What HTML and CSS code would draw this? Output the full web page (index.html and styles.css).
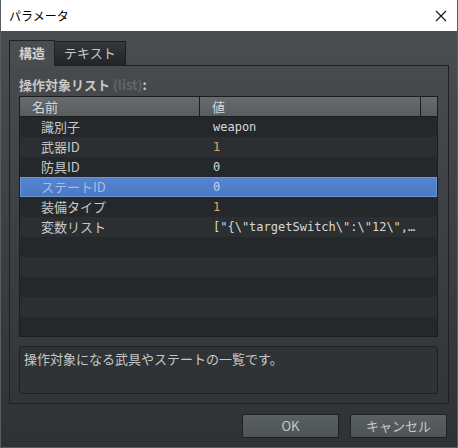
FILE: index.html
```html
<!doctype html>
<html lang="ja">
<head>
    <meta charset="UTF-8">
    <title>パラメータ</title>
    <link rel="stylesheet" href="styles.css">
</head>
<body>
<div class="win">
    <div class="titlebar">
        <span class="title">パラメータ</span>
        <svg class="close" width="12" height="12" viewBox="0 0 12 12">
            <path d="M1 1L11 11M11 1L1 11" stroke="#111" stroke-width="1.1"/>
        </svg>
    </div>
    <div class="main">
        <ul class="tabs">
            <li class="cur">構造</li>
            <li>テキスト</li>
        </ul>
        <div class="panel">
            <div class="label">操作対象リスト <span class="dim">(list)</span>:</div>
            <div class="grid">
                <div class="head">
                    <div class="c1">名前</div>
                    <div class="c2">値</div>
                    <div class="c3"></div>
                </div>
                <div class="row"><div class="c1">識別子</div><div class="c2">weapon</div></div>
                <div class="row"><div class="c1">武器ID</div><div class="c2 num">1</div></div>
                <div class="row"><div class="c1">防具ID</div><div class="c2">0</div></div>
                <div class="row sel"><div class="c1">ステートID</div><div class="c2">0</div></div>
                <div class="row"><div class="c1">装備タイプ</div><div class="c2 num">1</div></div>
                <div class="row"><div class="c1">変数リスト</div><div class="c2">["{\"targetSwitch\":\"12\",…</div></div>
                <div class="row"></div>
                <div class="row"></div>
                <div class="row"></div>
                <div class="row"></div>
                <div class="row"></div>
            </div>
            <div class="desc">操作対象になる武具やステートの一覧です。</div>
        </div>
        <div class="btns">
            <div class="btn">OK</div>
            <div class="btn">キャンセル</div>
        </div>
    </div>
</div>
</body>
</html>
```

FILE: styles.css
```css
*{
    margin: 0;
    padding: 0;
    list-style: none;
    box-sizing: border-box;
}
body{
    width: 458px;
    height: 448px;
    font-family: "Noto Sans CJK JP", "Noto Sans", sans-serif;
    font-size: 13px;
    color: #c8c8c8;
}
.win{
    height: 448px;
    display: flex;
    flex-direction: column;
    border: 1px solid #5a5d60;
    border-top: 0;
}
.titlebar{
    height: 31px;
    background: #fff;
    display: flex;
    align-items: center;
    justify-content: space-between;
    padding: 0 10px 0 8px;
}
.title{
    font-size: 12px;
    color: #000;
}
.main{
    flex: 1;
    background: linear-gradient(#4a4d50, #3a3d40 60%, #2f3235);
    padding: 9px 8px 0 8px;
    display: flex;
    flex-direction: column;
}
.tabs{
    display: flex;
    align-items: flex-end;
    height: 25px;
}
.tabs li{
    height: 24px;
    padding: 0 9px;
    line-height: 22px;
    border: 1px solid #1e2022;
    border-bottom: 0;
    background: linear-gradient(#34383b, #222527);
    margin-left: -1px;
}
.tabs li.cur{
    height: 26px;
    margin: 0 0 -1px 0;
    background: #4a4d50;
    font-weight: bold;
    color: #d2d2d2;
    position: relative;
    z-index: 1;
    padding: 0 9px;
    line-height: 24px;
}
.panel{
    height: 339px;
    border: 1px solid #1e2022;
    padding: 9px 10px 0 9px;
    display: flex;
    flex-direction: column;
}
.label{
    font-weight: bold;
    height: 21px;
    line-height: 20px;
}
.dim{
    color: #62666a;
}
.grid{
    height: 241px;
    border: 1px solid #1b1d1f;
    background: #25282b;
}
.head{
    display: flex;
    height: 20px;
    background: linear-gradient(#666b6e, #585c5f);
    border-bottom: 1px solid #1b1d1f;
    line-height: 19px;
    color: #d6d6d6;
}
.head .c1{
    width: 180px;
    padding-left: 12px;
    border-right: 1px solid #1b1d1f;
}
.head .c2{
    flex: 1;
    padding-left: 12px;
    border-right: 1px solid #1b1d1f;
}
.head .c3{
    width: 16px;
}
.row{
    display: flex;
    height: 20px;
    line-height: 20px;
}
.row:nth-child(odd){
    background: #2c2f32;
}
.row .c1{
    width: 180px;
    padding-left: 21px;
}
.row .c2{
    flex: 1;
    padding-left: 13px;
    font-family: "DejaVu Sans Mono", monospace;
    font-size: 12px;
    color: #d8d8d8;
    white-space: nowrap;
    overflow: hidden;
}
.row .c2.num{
    color: #e8a45a;
}
.row.sel{
    background: linear-gradient(#5684d2, #4c78c4);
    border: 1px solid #6d96d6;
    line-height: 18px;
}
.row.sel .c1{
    padding-left: 20px;
    color: #a8bde4;
}
.row.sel .c2{
    padding-left: 12px;
    color: #c4d2ee;
}
.desc{
    margin-top: 9px;
    height: 48px;
    border: 1px solid #1e2022;
    border-radius: 3px;
    background: #303336;
    padding: 2px 4px;
    line-height: 20px;
}
.btns{
    display: flex;
    justify-content: flex-end;
    gap: 11px;
    padding: 10px 2px 0 0;
}
.btn{
    width: 97px;
    height: 24px;
    line-height: 22px;
    text-align: center;
    border: 1px solid #1e2022;
    border-radius: 2px;
    background: linear-gradient(#5a5f62, #4e5356);
    color: #c8c8c8;
}
```
